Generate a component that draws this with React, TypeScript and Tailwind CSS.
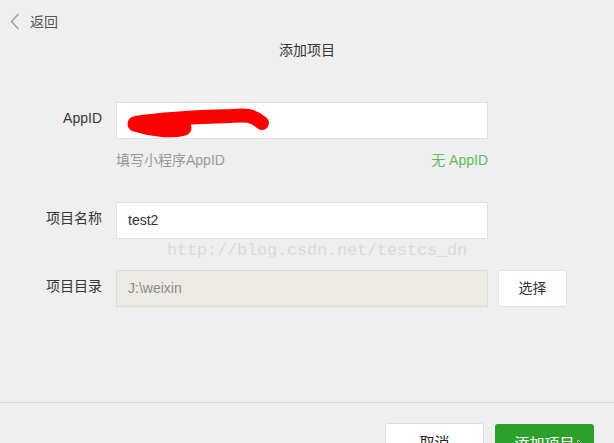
const font = { fontFamily: '"Liberation Sans", "Noto Sans CJK SC", sans-serif' };

function Label({ children }: { children: React.ReactNode }) {
  return <div className="w-[102px] shrink-0 text-right text-[14px] text-[#353535] -mt-[4px]">{children}</div>;
}

export default function App() {
  return (
    <div className="relative flex h-[443px] w-[614px] flex-col overflow-hidden bg-[#efefef]" style={font}>
      {/* back */}
      <div className="mt-[13px] flex h-[18px] items-center pl-[10px] text-[14px] leading-[18px] text-[#555]">
        <svg width="10" height="17" viewBox="0 0 10 17" className="-mt-[1px]">
          <polyline points="8.5,1 1.5,8.5 8.5,16" fill="none" stroke="#9a9a9a" strokeWidth="1.3" />
        </svg>
        <span className="ml-[10px]">返回</span>
      </div>

      {/* title */}
      <div className="mt-[10px] text-center text-[14px] leading-[18px] text-[#353535]">添加项目</div>

      {/* AppID */}
      <div className="mt-[43px] flex items-center">
        <Label>AppID</Label>
        <div className="relative ml-[14px] h-[37px] w-[372px] border border-[#e0e0e0] bg-white">
          <svg className="absolute -left-px -top-px" width="372" height="37" viewBox="0 0 372 37">
            <path
              d="M20 21 C 45 17, 80 15, 115 14 C 128 13, 136 12, 146 21"
              stroke="#ff0000"
              strokeWidth="14"
              strokeLinecap="round"
              fill="none"
            />
            <path d="M19 22 C 35 27, 55 30, 68 26" stroke="#ff0000" strokeWidth="15" strokeLinecap="round" fill="none" />
          </svg>
        </div>
      </div>
      <div className="ml-[116px] mt-[12px] flex w-[372px] justify-between text-[14px] leading-[18px]">
        <span className="text-[#999]">填写小程序AppID</span>
        <span className="text-[#5fba5a]">无 AppID</span>
      </div>

      {/* name */}
      <div className="mt-[33px] flex items-center">
        <Label>项目名称</Label>
        <div className="ml-[14px] flex h-[37px] w-[372px] items-center border border-[#e0e0e0] bg-white pl-[11px] text-[14px] text-[#333]">
          test2
        </div>
      </div>

      {/* watermark */}
      <div className="pointer-events-none absolute left-[167px] top-[241px] text-[17px] leading-[20px] tracking-[-0.2px] text-[#dadada]" style={{ fontFamily: '"Liberation Mono", monospace' }}>
        http://blog.csdn.net/testcs_dn
      </div>

      {/* dir */}
      <div className="mt-[31px] flex items-center">
        <Label>项目目录</Label>
        <div className="ml-[14px] flex h-[37px] w-[372px] items-center border border-[#dddcd6] bg-[#ebeae5] pl-[11px] text-[14px] text-[#8a8a8a]">
          J:\weixin
        </div>
        <button className="ml-[10px] h-[37px] w-[69px] rounded-[3px] border border-[#e3e3e3] bg-white text-[14px] text-[#353535]">
          选择
        </button>
      </div>

      <div className="mt-[95px] border-t border-[#d9d9d9]" />

      <div className="mt-[20px] flex justify-end gap-[11px] pr-[20px]">
        <button className="h-[40px] w-[99px] rounded-[3px] border border-[#dcdcdc] bg-white text-[15px] text-[#222]">取消</button>
        <button className="relative mt-px h-[40px] w-[99px] rounded-[3px] bg-[#2ba02b] text-[15px] text-white">
          添加项目
          <svg className="absolute left-[82px] top-[15px]" width="8" height="12" viewBox="0 0 8 12">
            <path d="M1 1 L1 10 L3 8 L5 11 L6 10 L4 7 L7 7 Z" fill="#000" stroke="#fff" strokeWidth="0.8" />
          </svg>
        </button>
      </div>
    </div>
  );
}
